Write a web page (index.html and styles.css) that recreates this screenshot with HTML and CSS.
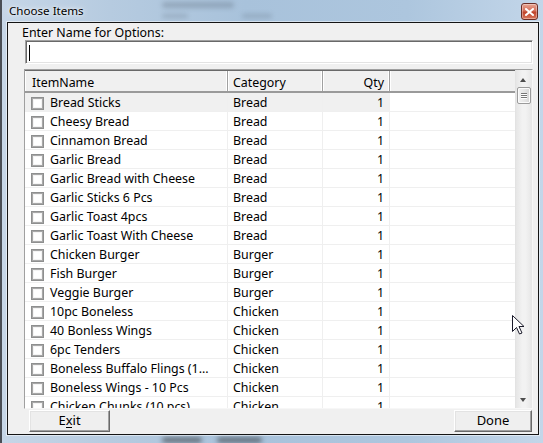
FILE: index.html
```html
<!DOCTYPE html>
<html>
<head>
<meta charset="utf-8">
<link rel="stylesheet" href="styles.css">
</head>
<body>
<div class="desktop">
  <div class="behind">
    <span class="smudge s1"></span>
    <span class="smudge s2"></span>
    <span class="smudge s3"></span>
    <span class="smudge s4"></span>
    <span class="smudge s5"></span>
  </div>
  <div class="window">
    <div class="titlebar">
      <span class="title">Choose Items</span>
      <span class="close">
        <svg width="9" height="8" viewBox="0 0 9 8"><path d="M1 1 L8 7 M8 1 L1 7" stroke="#fff" stroke-width="2" stroke-linecap="square"/></svg>
      </span>
    </div>
    <div class="client">
      <div class="label">Enter Name for Options:</div>
      <div class="input"><span class="caret"></span></div>
      <div class="grid">
        <div class="gridmain">
          <div class="header">
            <div class="hc c1">ItemName</div>
            <div class="hc c2">Category</div>
            <div class="hc c3 num">Qty</div>
            <div class="hc c4"></div>
          </div>
          <div class="rows">
            <div class="row sel"><div class="cell c1"><span class="cb"></span>Bread Sticks</div><div class="cell c2">Bread</div><div class="cell c3 num">1</div><div class="cell c4"></div></div>
            <div class="row"><div class="cell c1"><span class="cb"></span>Cheesy Bread</div><div class="cell c2">Bread</div><div class="cell c3 num">1</div><div class="cell c4"></div></div>
            <div class="row"><div class="cell c1"><span class="cb"></span>Cinnamon Bread</div><div class="cell c2">Bread</div><div class="cell c3 num">1</div><div class="cell c4"></div></div>
            <div class="row"><div class="cell c1"><span class="cb"></span>Garlic Bread</div><div class="cell c2">Bread</div><div class="cell c3 num">1</div><div class="cell c4"></div></div>
            <div class="row"><div class="cell c1"><span class="cb"></span>Garlic Bread with Cheese</div><div class="cell c2">Bread</div><div class="cell c3 num">1</div><div class="cell c4"></div></div>
            <div class="row"><div class="cell c1"><span class="cb"></span>Garlic Sticks 6 Pcs</div><div class="cell c2">Bread</div><div class="cell c3 num">1</div><div class="cell c4"></div></div>
            <div class="row"><div class="cell c1"><span class="cb"></span>Garlic Toast 4pcs</div><div class="cell c2">Bread</div><div class="cell c3 num">1</div><div class="cell c4"></div></div>
            <div class="row"><div class="cell c1"><span class="cb"></span>Garlic Toast With Cheese</div><div class="cell c2">Bread</div><div class="cell c3 num">1</div><div class="cell c4"></div></div>
            <div class="row"><div class="cell c1"><span class="cb"></span>Chicken Burger</div><div class="cell c2">Burger</div><div class="cell c3 num">1</div><div class="cell c4"></div></div>
            <div class="row"><div class="cell c1"><span class="cb"></span>Fish Burger</div><div class="cell c2">Burger</div><div class="cell c3 num">1</div><div class="cell c4"></div></div>
            <div class="row"><div class="cell c1"><span class="cb"></span>Veggie Burger</div><div class="cell c2">Burger</div><div class="cell c3 num">1</div><div class="cell c4"></div></div>
            <div class="row"><div class="cell c1"><span class="cb"></span>10pc Boneless</div><div class="cell c2">Chicken</div><div class="cell c3 num">1</div><div class="cell c4"></div></div>
            <div class="row"><div class="cell c1"><span class="cb"></span>40 Bonless Wings</div><div class="cell c2">Chicken</div><div class="cell c3 num">1</div><div class="cell c4"></div></div>
            <div class="row"><div class="cell c1"><span class="cb"></span>6pc Tenders</div><div class="cell c2">Chicken</div><div class="cell c3 num">1</div><div class="cell c4"></div></div>
            <div class="row"><div class="cell c1"><span class="cb"></span>Boneless Buffalo Flings (1...</div><div class="cell c2">Chicken</div><div class="cell c3 num">1</div><div class="cell c4"></div></div>
            <div class="row"><div class="cell c1"><span class="cb"></span>Boneless Wings - 10 Pcs</div><div class="cell c2">Chicken</div><div class="cell c3 num">1</div><div class="cell c4"></div></div>
            <div class="row"><div class="cell c1"><span class="cb"></span>Chicken Chunks (10 pcs)</div><div class="cell c2">Chicken</div><div class="cell c3 num">1</div><div class="cell c4"></div></div>
          </div>
        </div>
        <div class="scrollbar">
          <div class="arrow up"></div>
          <div class="thumb"><span></span><span></span><span></span></div>
          <div class="track"></div>
          <div class="arrow down"></div>
        </div>
      </div>
      <div class="buttons">
        <div class="btn exit"><span class="ul">Exit</span></div>
        <div class="btn done">Done</div>
      </div>
    </div>
  </div>
  <svg class="cursor" width="13" height="20" viewBox="0 0 13 20">
    <path d="M0.5 0.5 L0.5 16.5 L4.5 12.5 L7.5 19 L10 18 L7 11.5 L12 11.5 Z" fill="#fff" stroke="#1a1a2a" stroke-width="1" stroke-linejoin="miter"/>
  </svg>
</div>
</body>
</html>
```

FILE: styles.css
```css
html, body {
  margin: 0;
  padding: 0;
}
body {
  width: 543px;
  height: 443px;
  overflow: hidden;
  font-family: "Segoe UI", "Noto Sans", "Open Sans", sans-serif;
  font-size: 12.4px;
  color: #000;
}
.desktop {
  position: relative;
  width: 543px;
  height: 443px;
  background: linear-gradient(90deg, #c6d6e7 0%, #b6cbe0 20%, #a8c2db 45%, #adc6de 75%, #c3d6e9 100%);
  border-left: 2px solid #4a4e55;
  box-sizing: border-box;
}
.behind {
  position: absolute;
  inset: 0;
  pointer-events: none;
}
.smudge {
  position: absolute;
  background: #5c6a7a;
  filter: blur(2.5px);
  opacity: 0.35;
  border-radius: 3px;
}
.s1 { left: 160px; top: 2px; width: 72px; height: 6px; }
.s2 { left: 160px; top: 14px; width: 26px; height: 4px; opacity: 0.3; }
.s3 { left: 240px; top: 14px; width: 30px; height: 4px; opacity: 0.3; }
.s4 { left: 160px; top: 437px; width: 40px; height: 6px; background: #222; opacity: 0.5; }
.s5 { left: 215px; top: 437px; width: 45px; height: 6px; background: #222; opacity: 0.5; }
.window {
  position: relative;
  padding-left: 5px;
}
.titlebar {
  height: 22px;
  display: flex;
  align-items: flex-start;
  justify-content: space-between;
  padding-right: 5px;
}
.title {
  margin-left: 2px;
  margin-top: 3px;
  font-size: 11.6px;
  color: #000;
  text-shadow: 0 0 6px rgba(255,255,255,0.9), 0 0 3px rgba(255,255,255,0.8);
}
.close {
  margin-top: 3px;
  width: 15px;
  height: 15px;
  border: 1px solid #6b2d26;
  border-radius: 3px;
  background: linear-gradient(180deg, #e8a593 0%, #d46f5a 45%, #c0442c 55%, #d9765c 100%);
  display: flex;
  align-items: center;
  justify-content: center;
  box-shadow: inset 0 0 0 1px rgba(255,255,255,0.35);
}
.client {
  width: 530px;
  height: 411px;
  border: 1px solid #141414;
  background: #f0f0f0;
  box-shadow: 0 0 0 1px rgba(255,255,255,0.5);
}
.label {
  height: 17px;
  line-height: 17px;
  padding-top: 1px;
  box-sizing: border-box;
  padding-left: 14px;
  color: #000;
}
.input {
  margin-left: 17px;
  width: 508px;
  height: 24px;
  box-sizing: border-box;
  background: #fff;
  border-top: 1px solid #a0a0a0;
  border-left: 1px solid #a0a0a0;
  border-right: 1px solid #fff;
  border-bottom: 1px solid #fff;
  box-shadow: inset 1px 1px 0 #696969, inset -1px -1px 0 #e3e3e3;
  padding: 4px 0 0 3px;
}
.caret {
  display: block;
  width: 1px;
  height: 16px;
  background: #000;
}
.grid {
  margin-top: 5px;
  margin-left: 16px;
  width: 509px;
  height: 340px;
  box-sizing: border-box;
  border: 1px solid #a0a0a0;
  border-bottom-color: #f7f7f7;
  border-right-color: #f7f7f7;
  display: flex;
  background: #fff;
}
.gridmain {
  width: 491px;
  overflow: hidden;
  display: flex;
  flex-direction: column;
}
.header {
  display: flex;
  height: 23px;
  box-sizing: border-box;
  background: #f0f0f0;
  border-top: 1px solid #696969;
  border-bottom: 2px solid #9a9a9a;
  flex: none;
}
.hc {
  box-sizing: border-box;
  line-height: 20px;
  padding-top: 2px;
  border-right: 1px solid #a0a0a0;
  box-shadow: inset -1px 0 0 #fff, inset 1px 0 0 #fff;
  white-space: nowrap;
  overflow: hidden;
}
.hc.c1 { padding-left: 7px; }
.hc.c2 { padding-left: 5px; }
.hc.num { text-align: right; padding-right: 5px; }
.hc.c4 { border-right: none; box-shadow: inset 1px 0 0 #fff; }
.c1 { width: 203px; flex: none; }
.c2 { width: 95px; flex: none; }
.c3 { width: 67px; flex: none; }
.c4 { flex: 1; }
.rows {
  flex: 1;
  overflow: hidden;
}
.row {
  display: flex;
  height: 19px;
  box-sizing: border-box;
  border-bottom: 1px solid #efefef;
}
.cell {
  box-sizing: border-box;
  line-height: 18px;
  padding-top: 1px;
  border-right: 1px solid #efefef;
  white-space: nowrap;
  overflow: hidden;
}
.row.sel .c1, .row.sel .c2, .row.sel .c3 {
  background: #f0f0f0;
}
.cell.c1 {
  display: flex;
  align-items: flex-start;
  padding-left: 6px;
}
.cell.c2 { padding-left: 5px; }
.cell.num { text-align: right; padding-right: 5px; }
.cell.c4 { border-right: none; }
.cb {
  width: 13px;
  height: 13px;
  box-sizing: border-box;
  border: 1px solid #8e8f8f;
  box-shadow: inset 0 0 0 1px #a8a8a8, inset 0 0 0 2px #f4f4f4;
  background: #fff;
  margin-right: 6px;
  flex: none;
  margin-top: 3px;
}
.scrollbar {
  width: 16px;
  flex: none;
  display: flex;
  flex-direction: column;
  background: linear-gradient(90deg, #e6e6e6, #f2f2f2 40%, #f2f2f2 60%, #e6e6e6);
  border-left: 1px solid #e3e3e3;
}
.arrow {
  height: 17px;
  flex: none;
  position: relative;
}
.arrow::after {
  content: "";
  position: absolute;
  left: 4px;
  width: 0;
  height: 0;
  border-left: 3.5px solid transparent;
  border-right: 3.5px solid transparent;
}
.arrow.up::after {
  top: 8px;
  border-bottom: 4px solid #4d4d4d;
}
.arrow.down::after {
  top: 7px;
  border-top: 4px solid #4d4d4d;
}
.thumb {
  height: 17px;
  margin: 0 1px 0 1px;
  box-sizing: border-box;
  border: 1px solid #9b9b9b;
  border-radius: 2px;
  background: linear-gradient(90deg, #f2f2f2, #e7e7e7 50%, #d6d6d6);
  box-shadow: inset 0 0 0 1px #fbfbfb;
  display: flex;
  flex-direction: column;
  justify-content: center;
  align-items: center;
  gap: 1px;
  flex: none;
}
.thumb span {
  display: block;
  width: 6px;
  height: 1px;
  background: #777;
  box-shadow: 0 1px 0 #fff;
}
.track { flex: 1; }
.buttons {
  margin-top: 1px;
  height: 22px;
  display: flex;
  justify-content: space-between;
  padding: 0 6px 0 21px;
}
.btn {
  height: 22px;
  box-sizing: border-box;
  background: #efefef;
  border-top: 1px solid #fff;
  border-left: 1px solid #fff;
  border-right: 1px solid #696969;
  border-bottom: 1px solid #696969;
  box-shadow: inset -1px -1px 0 #a0a0a0, inset 1px 1px 0 #e3e3e3;
  text-align: center;
  line-height: 19px;
  font-size: 13px;
}
.ul {
  background: linear-gradient(#000, #000) no-repeat;
  background-size: 6px 1px;
  background-position: 8px 16px;
}
.exit { width: 81px; }
.done { width: 78px; }
.cursor {
  position: absolute;
  left: 510px;
  top: 315px;
}
```
